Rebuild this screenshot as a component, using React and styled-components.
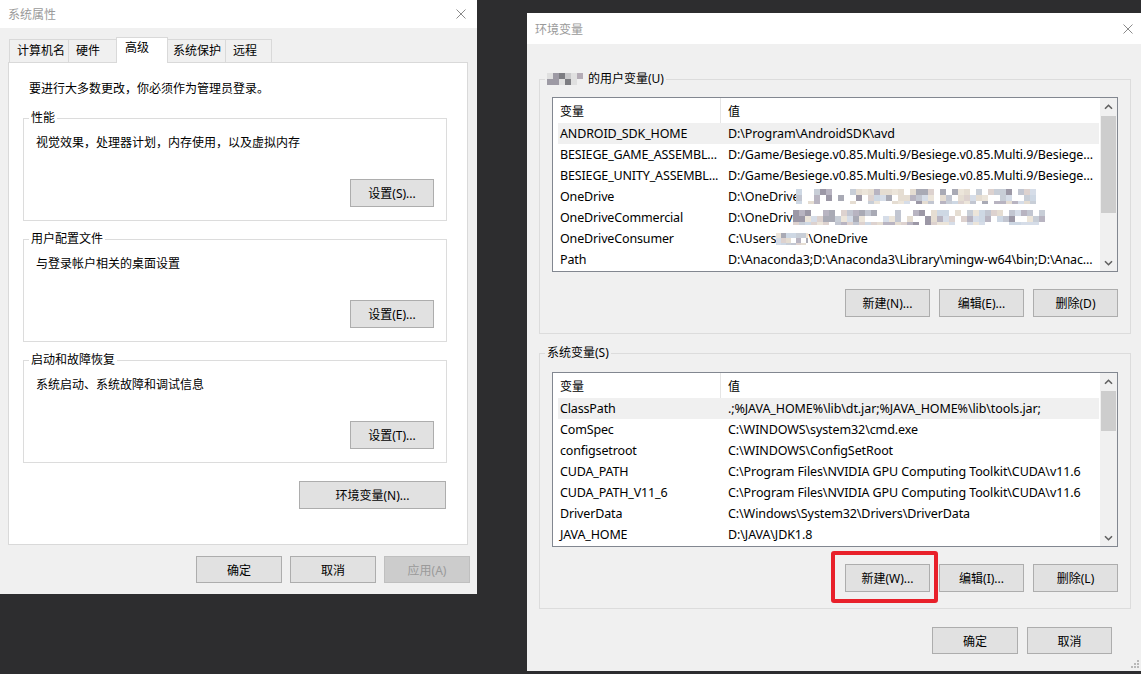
import React from 'react';
import styled, { createGlobalStyle } from 'styled-components';

const GlobalStyle = createGlobalStyle`
    html, body {
        margin: 0;
        padding: 0;
    }
    body {
        background: #2d2d2f;
        font-family: "Noto Sans", "Noto Sans CJK SC", sans-serif;
        font-size: 12px;
        color: #000;
        overflow: hidden;
    }
`;

const Desktop = styled.div`
    position: relative;
    width: 1141px;
    height: 674px;
    overflow: hidden;
    background: #2d2d2f;
`;

// windows sit on the desktop at their own place
const Window = styled.div`
    position: absolute;
    left: ${(p) => p.$x}px;
    top: ${(p) => p.$y}px;
    width: ${(p) => p.$w}px;
    height: ${(p) => p.$h}px;
    background: #f0f0f0;
    display: flex;
    flex-direction: column;
    box-sizing: border-box;
`;

const TitleBar = styled.div`
    flex: none;
    height: ${(p) => p.$h}px;
    background: #fff;
    display: flex;
    align-items: center;
    justify-content: space-between;
    padding: 0 ${(p) => p.$closeGap}px 0 8px;
    color: #9a9a9a;
    font-size: 12px;
`;

const CloseIcon = () => (
    <svg width='10' height='10' viewBox='0 0 10 10'>
        <path d='M0.5 0.5 L9.5 9.5 M9.5 0.5 L0.5 9.5' stroke='#8a8a8a' strokeWidth='1' fill='none' />
    </svg>
);

/* ---------- left: 系统属性 ---------- */

const TabStrip = styled.div`
    display: flex;
    align-items: flex-end;
    height: 25px;
    margin: 9px 0 0 9px;
    position: relative;
    z-index: 1;
`;

const Tab = styled.div`
    position: relative;
    box-sizing: border-box;
    width: ${(p) => p.$w}px;
    height: ${(p) => (p.$active ? 26 : 23)}px;
    margin: ${(p) => (p.$active ? '0 -2px -1px -3px' : p.$first ? '0' : '0 0 0 -1px')};
    padding-left: ${(p) => (p.$active ? 8 : 7)}px;
    border: 1px solid #d9d9d9;
    border-bottom: none;
    background: ${(p) => (p.$active ? '#fff' : '#f0f0f0')};
    line-height: ${(p) => (p.$active ? 20 : 22)}px;
    z-index: ${(p) => (p.$active ? 2 : 0)};
    white-space: nowrap;
`;

const TabPanel = styled.div`
    box-sizing: border-box;
    height: 483px;
    margin: 0 9px 0 8px;
    background: #fff;
    border: 1px solid #d9d9d9;
    padding: 0 20px 0 14px;
    display: flex;
    flex-direction: column;
`;

const Intro = styled.div`
    line-height: 16px;
    margin: 18px 0 13px 6px;
`;

const Group = styled.fieldset`
    margin: ${(p) => p.$mt || 0}px 0 0 0;
    padding: ${(p) => p.$pt}px 12px ${(p) => p.$pb}px 12px;
    border: 1px solid #dcdcdc;
    min-width: 0;
    display: flex;
    flex-direction: column;
`;

const Legend = styled.legend`
    padding: 0 2px;
    margin-left: -7px;
    line-height: 16px;
    display: flex;
    align-items: center;
`;

const GroupText = styled.div`
    line-height: 16px;
`;

const Button = styled.button`
    box-sizing: border-box;
    width: ${(p) => p.$w}px;
    height: ${(p) => p.$h || 28}px;
    padding: 0;
    background: #e1e1e1;
    border: 1px solid #adadad;
    font: inherit;
    font-size: 12px;
    color: #000;
    flex: none;

    &:disabled {
        background: #cccccc;
        border-color: #bfbfbf;
        color: #9a9a9a;
    }
`;

const RightButton = styled(Button)`
    align-self: flex-end;
    margin-top: ${(p) => p.$mt}px;
    margin-right: ${(p) => p.$mr || 0}px;
`;

const ButtonRow = styled.div`
    display: flex;
    justify-content: flex-end;
    gap: ${(p) => p.$gap || 9}px;
    margin-top: ${(p) => p.$mt}px;
    margin-right: ${(p) => p.$mr || 0}px;
`;

/* ---------- right: 环境变量 ---------- */

const EnvBody = styled.div`
    flex: 1;
    display: flex;
    flex-direction: column;
    padding: 27px 11px 0 12px;
`;

const ListView = styled.div`
    box-sizing: border-box;
    height: 175px;
    border: 1px solid #828790;
    background: #fff;
    display: flex;
    flex: none;
`;

const ListMain = styled.div`
    flex: 1;
    min-width: 0;
    padding: 0 1px 0 5px;
    display: flex;
    flex-direction: column;
`;

const HeaderRow = styled.div`
    display: flex;
    height: 25px;
    align-items: stretch;
`;

const Row = styled.div`
    display: flex;
    height: 21px;
    align-items: center;
    background: ${(p) => (p.$selected ? '#f0f0f0' : 'transparent')};
    font-size: 12.5px;
    letter-spacing: -0.1px;
`;

const NameCell = styled.div`
    box-sizing: border-box;
    width: 163px;
    flex: none;
    padding-left: 2px;
    white-space: nowrap;
    overflow: hidden;
    display: flex;
    align-items: center;
    letter-spacing: ${(p) => (p.$header ? 0 : -0.15)}px;
    border-right: ${(p) => (p.$header ? '1px solid #e5e5e5' : 'none')};
`;

const ValueCell = styled.div`
    flex: 1;
    min-width: 0;
    padding-left: 7px;
    white-space: nowrap;
    overflow: hidden;
    display: flex;
    align-items: center;
`;

const ScrollBar = styled.div`
    width: 17px;
    flex: none;
    background: #f0f0f0;
    display: flex;
    flex-direction: column;
`;

const ScrollArrow = styled.div`
    height: 17px;
    flex: none;
    display: flex;
    align-items: center;
    justify-content: center;
`;

const ScrollTrack = styled.div`
    flex: 1;
    display: flex;
    flex-direction: column;
`;

const Thumb = styled.div`
    margin: ${(p) => p.$top}px 1px 0 1px;
    height: ${(p) => p.$h}px;
    background: #cdcdcd;
`;

const Chevron = ({ down }) => (
    <svg width='9' height='6' viewBox='0 0 9 6'>
        <path
            d={down ? 'M1 1.2 L4.5 4.7 L8 1.2' : 'M1 4.8 L4.5 1.3 L8 4.8'}
            stroke='#606060'
            strokeWidth='1.6'
            fill='none'
        />
    </svg>
);

const Highlight = styled.div`
    position: relative;
    display: flex;

    &::after {
        content: '';
        position: absolute;
        top: -13px;
        left: -14px;
        right: -8px;
        bottom: -11px;
        border: 4px solid #e8202a;
        border-radius: 3px;
        pointer-events: none;
    }
`;

const MosaicSvg = styled.svg`
    display: inline-block;
    flex: none;
    margin: ${(p) => p.$m || '0'};
`;

const Grip = styled.svg`
    position: absolute;
    right: 2px;
    bottom: 2px;
`;

const LIGHT = ['#d6dde8', '#c2c6d1', '#e5ddd2', '#b8b4c1', '#ced8e4', '#ece5da', '#a9aab5', '#ddd2cf', '#c8ced7', '#9c98a6'];
const DARK = ['#c9c9cb', '#9d9aa4', '#b4acb6', '#7d7d82', '#e0e0e0', '#8f8f96'];

const Mosaic = ({ w, h, cell = 6, seed = 1, palette = LIGHT, fill = 0.72, m }) => {
    let s = seed * 7919;
    const rand = () => {
        s = (s * 9301 + 49297) % 233280;
        return s / 233280;
    };
    const rects = [];
    for (let y = 0; y < h; y += cell) {
        for (let x = 0; x < w; x += cell) {
            const r = rand();
            const c = palette[Math.floor(rand() * palette.length)];
            if (r < fill) rects.push(<rect key={`${x}-${y}`} x={x} y={y} width={cell} height={cell} fill={c} />);
        }
    }
    return (
        <MosaicSvg width={w} height={h} viewBox={`0 0 ${w} ${h}`} $m={m}>
            {rects}
        </MosaicSvg>
    );
};

const besiege = 'D:/Game/Besiege.v0.85.Multi.9/Besiege.v0.85.Multi.9/Besiege...';
const cuda = 'C:\\Program Files\\NVIDIA GPU Computing Toolkit\\CUDA\\v11.6';

const userVars = [
    ['ANDROID_SDK_HOME', ['D:\\Program\\AndroidSDK\\avd']],
    ['BESIEGE_GAME_ASSEMBL...', [besiege]],
    ['BESIEGE_UNITY_ASSEMBL...', [besiege]],
    ['OneDrive', ['D:\\OneDrive', { w: 240, h: 15, seed: 3, m: '0 0 0 -3px' }]],
    ['OneDriveCommercial', ['D:\\OneDrive', { w: 252, h: 15, seed: 11, m: '0 0 0 -6px' }]],
    ['OneDriveConsumer', ['C:\\Users', { w: 32, h: 12, seed: 5, cell: 5, fill: 0.9 }, '\\OneDrive']],
    ['Path', ['D:\\Anaconda3;D:\\Anaconda3\\Library\\mingw-w64\\bin;D:\\Anac...']],
];

const sysVars = [
    ['ClassPath', ['.;%JAVA_HOME%\\lib\\dt.jar;%JAVA_HOME%\\lib\\tools.jar;']],
    ['ComSpec', ['C:\\WINDOWS\\system32\\cmd.exe']],
    ['configsetroot', ['C:\\WINDOWS\\ConfigSetRoot']],
    ['CUDA_PATH', [cuda]],
    ['CUDA_PATH_V11_6', [cuda]],
    ['DriverData', ['C:\\Windows\\System32\\Drivers\\DriverData']],
    ['JAVA_HOME', ['D:\\JAVA\\JDK1.8']],
];

const VarList = ({ rows, thumbTop, thumbH }) => (
    <ListView>
        <ListMain>
            <HeaderRow>
                <NameCell $header>变量</NameCell>
                <ValueCell>值</ValueCell>
            </HeaderRow>
            {rows.map(([name, parts], i) => (
                <Row key={name} $selected={i === 0}>
                    <NameCell>{name}</NameCell>
                    <ValueCell>
                        {parts.map((part, j) =>
                            typeof part === 'string' ? <span key={j}>{part}</span> : <Mosaic key={j} {...part} />
                        )}
                    </ValueCell>
                </Row>
            ))}
        </ListMain>
        <ScrollBar>
            <ScrollArrow>
                <Chevron />
            </ScrollArrow>
            <ScrollTrack>
                <Thumb $top={thumbTop} $h={thumbH} />
            </ScrollTrack>
            <ScrollArrow>
                <Chevron down />
            </ScrollArrow>
        </ScrollBar>
    </ListView>
);

const tabs = [
    { label: '计算机名', w: 60 },
    { label: '硬件', w: 51 },
    { label: '高级', w: 52, active: true },
    { label: '系统保护', w: 61 },
    { label: '远程', w: 47 },
];

const App = () => {
    return (
        <Desktop>
            <GlobalStyle />

            <Window $x={0} $y={0} $w={477} $h={594}>
                <TitleBar $h={28} $closeGap={11}>
                    <span>系统属性</span>
                    <CloseIcon />
                </TitleBar>
                <TabStrip>
                    {tabs.map((t, i) => (
                        <Tab key={t.label} $w={t.w} $active={t.active} $first={i === 0}>
                            {t.label}
                        </Tab>
                    ))}
                </TabStrip>
                <TabPanel>
                    <Intro>要进行大多数更改，你必须作为管理员登录。</Intro>
                    <Group $pt={9} $pb={13}>
                        <Legend>性能</Legend>
                        <GroupText>视觉效果，处理器计划，内存使用，以及虚拟内存</GroupText>
                        <RightButton $w={84} $mt={28}>设置(S)...</RightButton>
                    </Group>
                    <Group $pt={9} $pb={13} $mt={10}>
                        <Legend>用户配置文件</Legend>
                        <GroupText>与登录帐户相关的桌面设置</GroupText>
                        <RightButton $w={84} $mt={28}>设置(E)...</RightButton>
                    </Group>
                    <Group $pt={9} $pb={13} $mt={10}>
                        <Legend>启动和故障恢复</Legend>
                        <GroupText>系统启动、系统故障和调试信息</GroupText>
                        <RightButton $w={84} $mt={28}>设置(T)...</RightButton>
                    </Group>
                    <RightButton $w={147} $mt={18} $mr={1}>
                        环境变量(N)...
                    </RightButton>
                </TabPanel>
                <ButtonRow $mt={11} $mr={7} $gap={8}>
                    <Button $w={86} $h={27}>确定</Button>
                    <Button $w={86} $h={27}>取消</Button>
                    <Button $w={86} $h={27} disabled>
                        应用(A)
                    </Button>
                </ButtonRow>
            </Window>

            <Window $x={527} $y={13} $w={615} $h={658}>
                <TitleBar $h={31} $closeGap={9}>
                    <span>环境变量</span>
                    <CloseIcon />
                </TitleBar>
                <EnvBody>
                    <Group $pt={10} $pb={16}>
                        <Legend>
                            <Mosaic w={36} h={12} cell={6} seed={7} palette={DARK} fill={0.9} m='0 5px 0 0' />
                            的用户变量(U)
                        </Legend>
                        <VarList rows={userVars} thumbTop={1} thumbH={97} />
                        <ButtonRow $mt={17}>
                            <Button $w={85}>新建(N)...</Button>
                            <Button $w={85}>编辑(E)...</Button>
                            <Button $w={85}>删除(D)</Button>
                        </ButtonRow>
                    </Group>
                    <Group $pt={11} $pb={16} $mt={11}>
                        <Legend>系统变量(S)</Legend>
                        <VarList rows={sysVars} thumbTop={1} thumbH={40} />
                        <ButtonRow $mt={17}>
                            <Highlight>
                                <Button $w={85}>新建(W)...</Button>
                            </Highlight>
                            <Button $w={85}>编辑(I)...</Button>
                            <Button $w={85}>删除(L)</Button>
                        </ButtonRow>
                    </Group>
                    <ButtonRow $mt={18} $mr={19}>
                        <Button $w={86} $h={27}>确定</Button>
                        <Button $w={85} $h={27}>取消</Button>
                    </ButtonRow>
                </EnvBody>
                <Grip width='10' height='10' viewBox='0 0 10 10'>
                    {[[8, 2], [5, 5], [8, 5], [2, 8], [5, 8], [8, 8]].map(([x, y]) => (
                        <rect key={`${x}${y}`} x={x - 1} y={y - 1} width='2' height='2' fill='#b8b8b8' />
                    ))}
                </Grip>
            </Window>
        </Desktop>
    );
};

export default App;
